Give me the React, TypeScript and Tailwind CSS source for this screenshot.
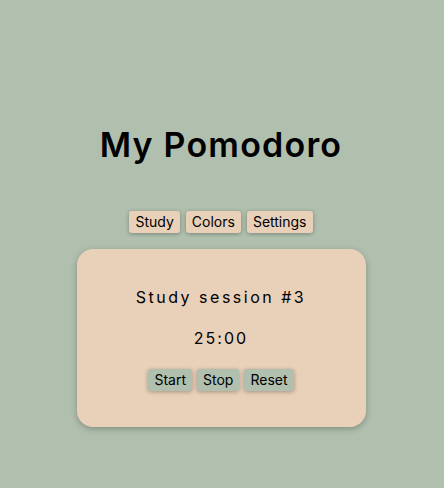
export default function App() {
  return (
    <div
      className="flex min-h-[488px] flex-col items-center bg-[#b0bfae] pr-[2px] text-black"
      style={{ fontFamily: "Inter, 'Open Sans', sans-serif" }}
    >
      <h1 className="mt-[124px] text-[34px] font-semibold leading-[42px] tracking-[1.2px]">
        My Pomodoro
      </h1>

      <div className="mt-[45px] flex gap-[6px]">
        <NavButton label="Study" />
        <NavButton label="Colors" />
        <NavButton label="Settings" />
      </div>

      <div className="mt-[16px] flex h-[178px] w-[289px] flex-col items-center rounded-[16px] bg-[#e9d0b8] shadow-[0_2px_6px_rgba(0,0,0,0.25)]">
        <div className="mt-[38px] text-[16px] leading-[20px] tracking-[2.5px]">
          Study session #3
        </div>
        <div className="mt-[21px] text-[16px] leading-[20px] tracking-[2px]">
          25:00
        </div>
        <div className="mt-[21px] flex gap-[5px]">
          <TimerButton label="Start" />
          <TimerButton label="Stop" />
          <TimerButton label="Reset" />
        </div>
      </div>
    </div>
  );
}

function NavButton({ label }: { label: string }) {
  return (
    <button className="h-[22px] rounded-[3px] bg-[#e9d0b8] px-[6px] text-[14px] leading-[22px] shadow-[0_1px_4px_rgba(0,0,0,0.3)]">
      {label}
    </button>
  );
}

function TimerButton({ label }: { label: string }) {
  return (
    <button className="h-[22px] rounded-[3px] bg-[#b0bfae] px-[6px] text-[14px] leading-[22px] shadow-[0_1px_4px_rgba(0,0,0,0.3)]">
      {label}
    </button>
  );
}
